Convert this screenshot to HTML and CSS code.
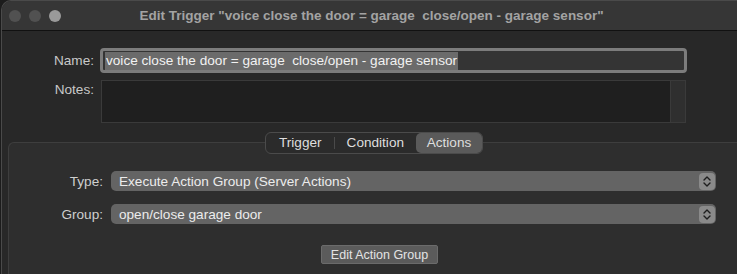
FILE: index.html
```html
<!DOCTYPE html>
<html>
<head>
<meta charset="utf-8">
<link rel="stylesheet" href="styles.css">
</head>
<body>
<div class="window">
  <div class="titlebar">
    <div class="lights">
      <span class="light"></span>
      <span class="light"></span>
      <span class="light light-on"></span>
    </div>
    <div class="title">Edit Trigger "voice close the door = garage  close/open - garage sensor"</div>
  </div>
  <div class="content">
    <div class="row name-row">
      <label class="label">Name:</label>
      <div class="name-field"><span class="sel">voice close the door = garage  close/open - garage sensor</span></div>
    </div>
    <div class="row notes-row">
      <label class="label">Notes:</label>
      <div class="notes"><div class="notes-area"></div><div class="scroller"></div></div>
    </div>
    <div class="box">
      <div class="seg-wrap">
        <div class="seg">
          <span class="seg-item">Trigger</span>
          <span class="seg-div"></span>
          <span class="seg-item">Condition</span>
          <span class="seg-item seg-active">Actions</span>
        </div>
      </div>
      <div class="prow prow-type">
        <label class="plabel">Type:</label>
        <div class="popup"><span>Execute Action Group (Server Actions)</span>
          <span class="stepper"><svg width="8" height="11" viewBox="0 0 8 11"><path d="M1 4 L4 1 L7 4 M1 7 L4 10 L7 7" fill="none" stroke="#1e1e1e" stroke-width="1.4" stroke-linecap="round" stroke-linejoin="round"/></svg></span>
        </div>
      </div>
      <div class="prow prow-group">
        <label class="plabel">Group:</label>
        <div class="popup"><span>open/close garage door</span>
          <span class="stepper"><svg width="8" height="11" viewBox="0 0 8 11"><path d="M1 4 L4 1 L7 4 M1 7 L4 10 L7 7" fill="none" stroke="#1e1e1e" stroke-width="1.4" stroke-linecap="round" stroke-linejoin="round"/></svg></span>
        </div>
      </div>
      <div class="btn-row">
        <button class="btn">Edit Action Group</button>
      </div>
    </div>
  </div>
</div>
</body>
</html>
```
FILE: styles.css
```css
html, body {
  margin: 0;
  padding: 0;
  background: #1c1c1c;
  overflow: hidden;
  width: 737px;
  height: 274px;
}
body {
  font-family: "Liberation Sans", Arial, sans-serif;
  font-size: 13.6px;
  color: #dcdcdc;
}
.window {
  margin-left: 1px;
  width: 736px;
  height: 274px;
  border: 1px solid #4a4a4a;
  border-right: none;
  border-bottom: none;
  border-radius: 10px 0 0 0;
  background: #282828;
  overflow: hidden;
  box-sizing: border-box;
  display: flex;
  flex-direction: column;
}
.titlebar {
  height: 29px;
  flex: none;
  background: #363636;
  border-bottom: 1px solid #111;
  display: flex;
  align-items: center;
}
.lights {
  display: flex;
  gap: 8px;
  padding-left: 7px;
  padding-top: 1px;
}
.light {
  width: 12px;
  height: 12px;
  border-radius: 50%;
  background: #515151;
}
.light-on {
  background: #9a9a9a;
}
.title {
  flex: 1;
  text-align: center;
  white-space: pre;
  font-weight: bold;
  font-size: 13.5px;
  color: #a3a3a3;
  margin-left: -50px;
  padding-right: 5px;
}
.content {
  flex: 1;
  display: flex;
  flex-direction: column;
  padding-top: 17px;
}
.row {
  display: flex;
  align-items: flex-start;
}
.label {
  width: 92px;
  text-align: right;
  color: #c9c9c9;
}
.name-row .label {
  line-height: 25px;
}
.name-field {
  margin-left: 6px;
  width: 587px;
  height: 25px;
  box-sizing: border-box;
  border: 3px solid #7c7c7c;
  border-radius: 4px;
  background: #343434;
  padding: 1px 0 0 2px;
  white-space: pre;
  line-height: 17px;
}
.sel {
  background: #6b6b6b;
  color: #f2f2f2;
  padding: 1px 1px 2px 1px;
}
.notes-row {
  margin-top: 7px;
}
.notes-row .label {
  line-height: 16px;
  padding-top: 2px;
}
.notes {
  margin-left: 7px;
  width: 585px;
  height: 43px;
  box-sizing: border-box;
  border: 1px solid #3a3a3a;
  display: flex;
}
.notes-area {
  flex: 1;
  background: #1f1f1f;
}
.scroller {
  width: 14px;
  background: #2f2f2f;
  border-left: 1px solid #3a3a3a;
}
.box {
  flex: 1;
  margin-top: 19px;
  margin-left: 6px;
  box-sizing: border-box;
  border: 1px solid #3e3e3e;
  border-right: none;
  border-bottom: none;
  border-radius: 6px 0 0 0;
  background: #2e2e2e;
}
.seg-wrap {
  display: flex;
  padding-left: 256px;
  margin-top: -11px;
}
.seg {
  display: flex;
  align-items: center;
  width: 218px;
  height: 22px;
  box-sizing: border-box;
  border: 1px solid #4b4b4b;
  border-radius: 6px;
  background: #2b2b2b;
  padding: 0 0 0 1px;
}
.seg-item {
  padding: 0 12px;
  line-height: 20px;
  color: #dedede;
}
.seg-div {
  width: 1px;
  height: 12px;
  background: #4a4a4a;
}
.seg-active {
  flex: 1;
  text-align: center;
  background: #5a5a5a;
  border-radius: 5px;
  padding: 0;
  height: 20px;
}
.prow {
  display: flex;
  align-items: center;
}
.prow-type {
  margin-top: 17px;
}
.prow-group {
  margin-top: 13px;
}
.plabel {
  width: 94px;
  text-align: right;
  color: #cfcfcf;
}
.popup {
  margin-left: 8px;
  width: 605px;
  height: 20px;
  box-sizing: border-box;
  background: #646464;
  border-radius: 5px;
  display: flex;
  align-items: center;
  justify-content: space-between;
  padding: 0 1px 0 8px;
  color: #ececec;
}
.stepper {
  width: 16px;
  height: 17px;
  border-radius: 4px;
  background: #8a8a8a;
  display: flex;
  align-items: center;
  justify-content: center;
}
.btn-row {
  display: flex;
  padding-left: 312px;
  margin-top: 21px;
}
.btn {
  font-family: "Liberation Sans", Arial, sans-serif;
  font-size: 12.5px;
  color: #e4e4e4;
  background: #5b5b5b;
  border: 1px solid #6b6b6b;
  border-radius: 2px;
  width: 117px;
  height: 19px;
  padding: 0;
}
```
